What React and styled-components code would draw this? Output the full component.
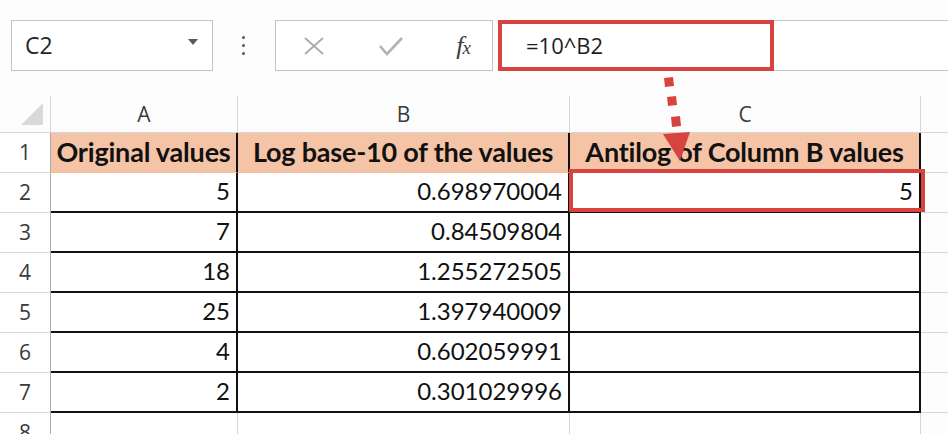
import React from 'react';
import styled, { createGlobalStyle } from 'styled-components';

const GlobalStyle = createGlobalStyle`
  html, body {
    margin: 0;
    padding: 0;
    background: #ffffff;
  }
  body {
    font-family: "Open Sans", "Liberation Sans", sans-serif;
  }
`;

const RED = '#d7433e';
const GRID = '#d6d6d6';
const INK = '#111111';

const Page = styled.div`
  position: relative;
  width: 948px;
  height: 434px;
  overflow: hidden;
  background: #fdfdfd;
`;

// toolbar with name box, the fx buttons and the formula bar
const Toolbar = styled.div`
  display: flex;
  align-items: flex-start;
  height: 93px;
  box-sizing: border-box;
  padding: 20px 0 0 11px;
`;

const NameBox = styled.div`
  display: flex;
  align-items: center;
  justify-content: space-between;
  width: 202px;
  height: 51px;
  box-sizing: border-box;
  border: 1px solid #c4c4c4;
  background: #fff;
  padding: 0 14px 2px 13px;
  font-size: 23px;
  color: #262626;
`;

const Caret = styled.span`
  width: 0;
  height: 0;
  margin-bottom: 6px;
  border-left: 5px solid transparent;
  border-right: 5px solid transparent;
  border-top: 6px solid #5a5a5a;
`;

const Dots = styled.div`
  display: flex;
  flex-direction: column;
  gap: 5px;
  margin: 16px 30px 0 29px;
  & > i {
    display: block;
    width: 3px;
    height: 3px;
    border-radius: 50%;
    background: #555;
  }
`;

const FxButtons = styled.div`
  display: flex;
  align-items: center;
  justify-content: space-between;
  width: 218px;
  height: 51px;
  box-sizing: border-box;
  border: 1px solid #c4c4c4;
  background: #fff;
  padding: 0 22px 0 26px;
`;

const Fx = styled.span`
  font-family: "Liberation Serif", "DejaVu Serif", serif;
  font-style: italic;
  font-size: 26px;
  color: #3c3c3c;
  letter-spacing: -1px;
  & > small {
    font-size: 19px;
  }
`;

const FormulaBar = styled.div`
  flex: 1;
  height: 51px;
  margin-left: 6px;
  box-sizing: border-box;
  border-top: 1px solid #c4c4c4;
  border-bottom: 1px solid #c4c4c4;
  background: #fff;
  display: flex;
  align-items: stretch;
`;

const FormulaHighlight = styled.div`
  width: 276px;
  margin: -1px 0 -1px -1px;
  box-sizing: border-box;
  border: 4px solid ${RED};
  display: flex;
  align-items: center;
  padding: 0 0 2px 24px;
  font-size: 22px;
  color: #1e1e1e;
`;

// spreadsheet grid
const Sheet = styled.div`
  display: grid;
  grid-template-columns: 51px 187px 332px 351px 1fr;
  grid-auto-rows: 40px;
`;

const ColHead = styled.div`
  height: 37px;
  box-sizing: border-box;
  border-right: 1px solid ${GRID};
  border-bottom: 1px solid ${GRID};
  display: flex;
  align-items: center;
  justify-content: center;
  font-size: 21px;
  color: #3a3a3a;
  align-self: end;
`;

const Corner = styled(ColHead)`
  justify-content: flex-end;
  align-items: flex-end;
  padding: 0 7px 7px 0;
  &::after {
    content: '';
    width: 0;
    height: 0;
    border-left: 22px solid transparent;
    border-bottom: 22px solid #d9d9d9;
  }
`;

const RowHead = styled.div`
  box-sizing: border-box;
  border-right: 1px solid #a9a9a9;
  border-bottom: 1px solid ${GRID};
  display: flex;
  align-items: center;
  justify-content: center;
  font-size: 21px;
  color: #3a3a3a;
  padding-bottom: 2px;
  background: #fff;
`;

const Cell = styled.div`
  position: relative;
  box-sizing: border-box;
  display: flex;
  align-items: center;
  justify-content: ${p => (p.$head ? 'center' : 'flex-end')};
  padding: ${p => (p.$head ? '0 3px 3px' : '0 6px 3px 4px')};
  overflow: ${p => (p.$head ? 'hidden' : 'visible')};
  white-space: nowrap;
  background: ${p => (p.$head ? '#f5c4a6' : '#fff')};
  border-right: 2px solid #111;
  border-bottom: ${p => (p.$head ? '1px solid #f0c0a2' : '2px solid #111')};
  font-family: Lato, "Open Sans", sans-serif;
  font-weight: ${p => (p.$head ? 700 : 400)};
  font-size: ${p => (p.$head ? '27px' : '24px')};
  letter-spacing: ${p => (p.$head ? '-0.2px' : '0')};
  color: ${INK};
`;

const EmptyCell = styled.div`
  box-sizing: border-box;
  border-right: 1px solid ${GRID};
  border-bottom: 1px solid ${GRID};
  background: #fff;
`;

const Filler = styled.div`
  box-sizing: border-box;
  border-bottom: 1px solid ${GRID};
  background: #fdfdfd;
`;

const HeaderFiller = styled(Filler)`
  height: 37px;
  align-self: end;
`;

const CellMark = styled.div`
  position: absolute;
  top: -4px;
  left: -1px;
  right: -6px;
  bottom: -1px;
  border: 4px solid ${RED};
  pointer-events: none;
`;

const ArrowLayer = styled.svg`
  position: absolute;
  left: 655px;
  top: 72px;
  overflow: visible;
`;

const rows = [
  ['5', '0.698970004', '5'],
  ['7', '0.84509804', ''],
  ['18', '1.255272505', ''],
  ['25', '1.397940009', ''],
  ['4', '0.602059991', ''],
  ['2', '0.301029996', ''],
];

function DashArrow() {
  return (
    <ArrowLayer width="45" height="95" viewBox="0 0 45 95">
      <g fill={RED}>
        <polygon points="9,6 18,5 19,14 10,15" />
        <polygon points="12,25 21,24 22,33 13,34" />
        <polygon points="16,45 25,44 26,54 17,55" />
        <polygon points="8,62 35,60 25,89" />
      </g>
    </ArrowLayer>
  );
}

export default function App() {
  return (
    <>
      <GlobalStyle />
      <Page>
        <Toolbar>
          <NameBox>
            <span>C2</span>
            <Caret />
          </NameBox>
          <Dots><i /><i /><i /></Dots>
          <FxButtons>
            <svg width="24" height="24" viewBox="0 0 24 24">
              <path d="M3 4 L21 20 M21 4 L3 20" stroke="#ababab" strokeWidth="1.8" fill="none" />
            </svg>
            <svg width="26" height="24" viewBox="0 0 26 24">
              <path d="M2 12 L9 20 L24 4" stroke="#b3b3b3" strokeWidth="2.6" fill="none" />
            </svg>
            <Fx>f<small>x</small></Fx>
          </FxButtons>
          <FormulaBar>
            <FormulaHighlight>=10^B2</FormulaHighlight>
          </FormulaBar>
        </Toolbar>

        <Sheet>
          <Corner />
          <ColHead>A</ColHead>
          <ColHead>B</ColHead>
          <ColHead>C</ColHead>
          <HeaderFiller />

          <RowHead>1</RowHead>
          <Cell $head>Original values</Cell>
          <Cell $head>Log base-10 of the values</Cell>
          <Cell $head>Antilog of Column B values</Cell>
          <Filler />

          {rows.map((r, i) => (
            <React.Fragment key={i}>
              <RowHead>{i + 2}</RowHead>
              <Cell>{r[0]}</Cell>
              <Cell>{r[1]}</Cell>
              <Cell>
                {r[2]}
                {i === 0 && <CellMark />}
              </Cell>
              <Filler />
            </React.Fragment>
          ))}

          <RowHead>8</RowHead>
          <EmptyCell />
          <EmptyCell />
          <EmptyCell />
          <Filler />
        </Sheet>

        <DashArrow />
      </Page>
    </>
  );
}
